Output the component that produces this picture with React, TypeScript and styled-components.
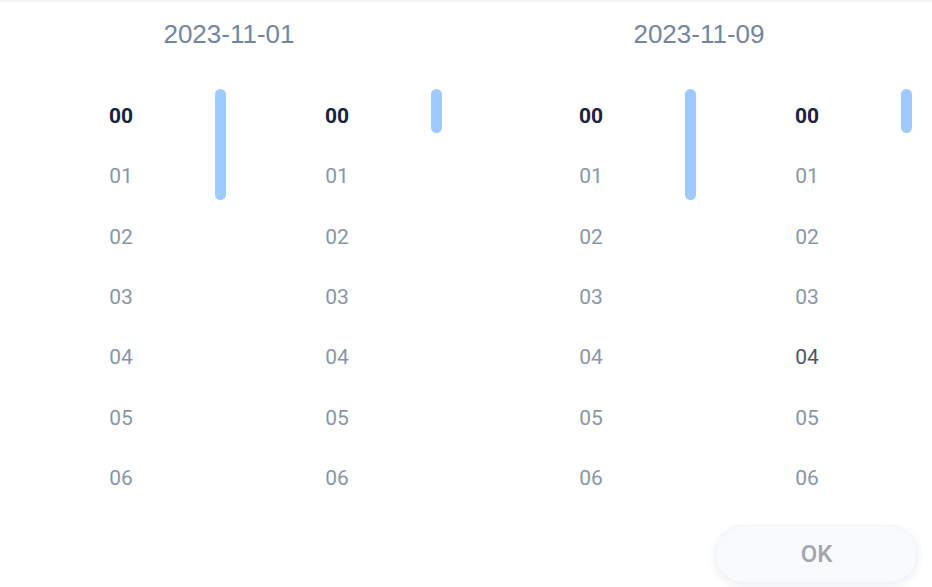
import React from "react";
import styled, { createGlobalStyle } from "styled-components";

const Global = createGlobalStyle`
  html, body { margin: 0; padding: 0; background: #ffffff; }
  body { font-family: Roboto, "Liberation Sans", sans-serif; }
`;

const ROW_H = 60.33;
const VISIBLE_ROWS = 7;
const VIEW_H = ROW_H * VISIBLE_ROWS;
const TRACK_H = 381;

const Page = styled.div`
  width: 932px;
  height: 587px;
  display: flex;
  flex-direction: column;
  background: #ffffff;
  overflow: hidden;
`;

const TopStrip = styled.div`
  height: 2px;
  background: #f3f4f6;
  flex: none;
`;

const Panels = styled.div`
  display: flex;
  gap: 12px;
`;

const Panel = styled.section`
  width: 458px;
  display: flex;
  flex-direction: column;
`;

const DateTitle = styled.div`
  padding-top: 17px;
  height: 30px;
  line-height: 30px;
  text-align: center;
  font-family: "Liberation Sans", Arial, sans-serif;
  font-size: 26px;
  color: #74869d;
`;

const Columns = styled.div`
  margin-top: 36px;
  padding: 0 13px;
  display: flex;
`;

const Column = styled.div`
  position: relative;
  width: 216px;
  height: ${VIEW_H}px;
  overflow: hidden;
`;

const List = styled.ul`
  list-style: none;
  margin: 0;
  padding: 1px 0 0;
`;

const Item = styled.li<{ $selected?: boolean; $hover?: boolean }>`
  height: ${ROW_H}px;
  display: flex;
  align-items: center;
  justify-content: center;
  font-family: Roboto, "Liberation Sans", sans-serif;
  font-size: 21px;
  font-weight: ${(p) => (p.$selected ? 700 : 400)};
  color: ${(p) => (p.$selected ? "#1a233b" : p.$hover ? "#4a5568" : "#8b95a7")};
`;

const Thumb = styled.div<{ $h: number }>`
  position: absolute;
  top: 4px;
  right: 3px;
  width: 11px;
  height: ${(p) => p.$h}px;
  border-radius: 6px;
  background: #9ecbff;
`;

const Footer = styled.div`
  display: flex;
  justify-content: flex-end;
  padding: 18px 14px 0 0;
`;

const OkButton = styled.button`
  width: 203px;
  height: 58px;
  border-radius: 29px;
  border: 1px solid #f1f4f8;
  background: #f8fafc;
  box-shadow: 0 3px 8px rgba(30, 50, 90, 0.08);
  font-family: Roboto, "Liberation Sans", sans-serif;
  font-size: 24px;
  font-weight: 500;
  color: #a1a5ad;
  cursor: pointer;
`;

const pad = (n: number) => String(n).padStart(2, "0");

function TimeColumn({ count, hoverIndex }: { count: number; hoverIndex?: number }) {
  const thumbH = (TRACK_H * VIEW_H) / (count * ROW_H);
  const shown = Math.min(count, VISIBLE_ROWS);
  return (
    <Column>
      <List>
        {Array.from({ length: shown }, (_, i) => (
          <Item key={i} $selected={i === 0} $hover={i === hoverIndex}>
            {pad(i)}
          </Item>
        ))}
      </List>
      <Thumb $h={thumbH} />
    </Column>
  );
}

function DatePanel({ date, hoverMinute }: { date: string; hoverMinute?: number }) {
  return (
    <Panel>
      <DateTitle>{date}</DateTitle>
      <Columns>
        <TimeColumn count={24} />
        <TimeColumn count={60} hoverIndex={hoverMinute} />
      </Columns>
    </Panel>
  );
}

export default function App() {
  return (
    <Page>
      <Global />
      <TopStrip />
      <Panels>
        <DatePanel date="2023-11-01" />
        <DatePanel date="2023-11-09" hoverMinute={4} />
      </Panels>
      <Footer>
        <OkButton>OK</OkButton>
      </Footer>
    </Page>
  );
}
